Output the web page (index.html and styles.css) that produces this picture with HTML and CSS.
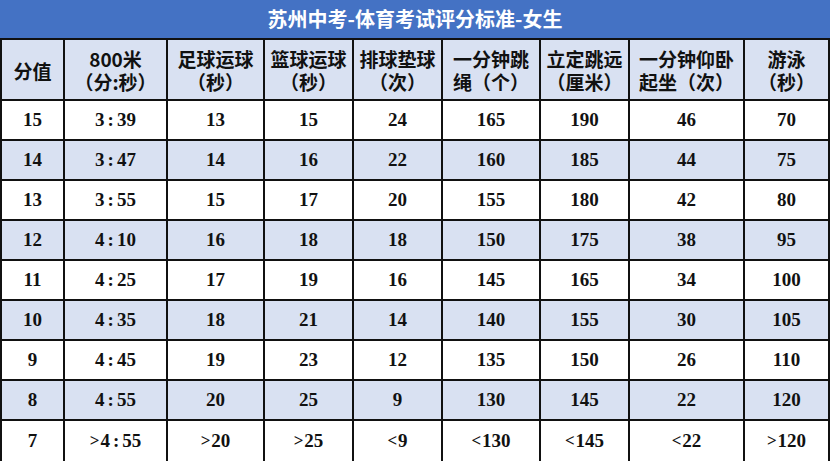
FILE: index.html
```html
<!DOCTYPE html>
<html lang="zh-CN">
<head>
<meta charset="utf-8">
<title>苏州中考-体育考试评分标准-女生</title>
<link rel="stylesheet" href="styles.css">
</head>
<body>
<div class="sheet">
  <div class="title">苏州中考-体育考试评分标准-女生</div>
  <div class="grid">
    <div class="cell head">分值</div>
    <div class="cell head">800米<br>（分:秒）</div>
    <div class="cell head">足球运球<br>（秒）</div>
    <div class="cell head">篮球运球<br>（秒）</div>
    <div class="cell head">排球垫球<br>（次）</div>
    <div class="cell head">一分钟跳<br>绳（个）</div>
    <div class="cell head">立定跳远<br>（厘米）</div>
    <div class="cell head">一分钟仰卧<br>起坐（次）</div>
    <div class="cell head">游泳<br>（秒）</div>

    <div class="cell">15</div><div class="cell">3<span class="c">:</span>39</div><div class="cell">13</div><div class="cell">15</div><div class="cell">24</div><div class="cell">165</div><div class="cell">190</div><div class="cell">46</div><div class="cell">70</div>

    <div class="cell alt">14</div><div class="cell alt">3<span class="c">:</span>47</div><div class="cell alt">14</div><div class="cell alt">16</div><div class="cell alt">22</div><div class="cell alt">160</div><div class="cell alt">185</div><div class="cell alt">44</div><div class="cell alt">75</div>

    <div class="cell">13</div><div class="cell">3<span class="c">:</span>55</div><div class="cell">15</div><div class="cell">17</div><div class="cell">20</div><div class="cell">155</div><div class="cell">180</div><div class="cell">42</div><div class="cell">80</div>

    <div class="cell alt">12</div><div class="cell alt">4<span class="c">:</span>10</div><div class="cell alt">16</div><div class="cell alt">18</div><div class="cell alt">18</div><div class="cell alt">150</div><div class="cell alt">175</div><div class="cell alt">38</div><div class="cell alt">95</div>

    <div class="cell">11</div><div class="cell">4<span class="c">:</span>25</div><div class="cell">17</div><div class="cell">19</div><div class="cell">16</div><div class="cell">145</div><div class="cell">165</div><div class="cell">34</div><div class="cell">100</div>

    <div class="cell alt">10</div><div class="cell alt">4<span class="c">:</span>35</div><div class="cell alt">18</div><div class="cell alt">21</div><div class="cell alt">14</div><div class="cell alt">140</div><div class="cell alt">155</div><div class="cell alt">30</div><div class="cell alt">105</div>

    <div class="cell">9</div><div class="cell">4<span class="c">:</span>45</div><div class="cell">19</div><div class="cell">23</div><div class="cell">12</div><div class="cell">135</div><div class="cell">150</div><div class="cell">26</div><div class="cell">110</div>

    <div class="cell alt">8</div><div class="cell alt">4<span class="c">:</span>55</div><div class="cell alt">20</div><div class="cell alt">25</div><div class="cell alt">9</div><div class="cell alt">130</div><div class="cell alt">145</div><div class="cell alt">22</div><div class="cell alt">120</div>

    <div class="cell">7</div><div class="cell"><span class="op">&gt;</span>4<span class="c">:</span>55</div><div class="cell"><span class="op">&gt;</span>20</div><div class="cell"><span class="op">&gt;</span>25</div><div class="cell"><span class="op">&lt;</span>9</div><div class="cell"><span class="op">&lt;</span>130</div><div class="cell"><span class="op">&lt;</span>145</div><div class="cell"><span class="op">&lt;</span>22</div><div class="cell"><span class="op">&gt;</span>120</div>
  </div>
</div>
</body>
</html>
```

FILE: styles.css
```css
html, body {
  margin: 0;
  padding: 0;
  background: #ffffff;
}

.sheet {
  width: 830px;
  height: 461px;
  overflow: hidden;
}

.title {
  height: 38px;
  background: #4472c4;
  color: #ffffff;
  font-family: "Noto Sans CJK SC", sans-serif;
  font-weight: 700;
  font-size: 20px;
  line-height: 38px;
  text-align: center;
}

.grid {
  display: grid;
  grid-template-columns: 61px 101px 95px 87px 87px 96px 87px 113px 83px;
  grid-template-rows: 59px repeat(8, 38px) 40px;
  gap: 2px;
  padding: 2px 2px 0 2px;
  background: #111111;
}

.cell {
  background: #ffffff;
  display: flex;
  align-items: center;
  justify-content: center;
  text-align: center;
  color: #111111;
  font-family: "Liberation Serif", "Noto Sans CJK SC", serif;
  font-weight: 700;
  font-size: 19px;
}

.cell.alt,
.cell.head {
  background: #d9e1f2;
}

.cell.head {
  font-family: "Noto Sans CJK SC", sans-serif;
  font-weight: 700;
  font-size: 19px;
  line-height: 23px;
  padding-top: 1px;
}

.c {
  margin: 0 3px;
}

.op {
  font-size: 17px;
  margin-right: 1px;
}
```
